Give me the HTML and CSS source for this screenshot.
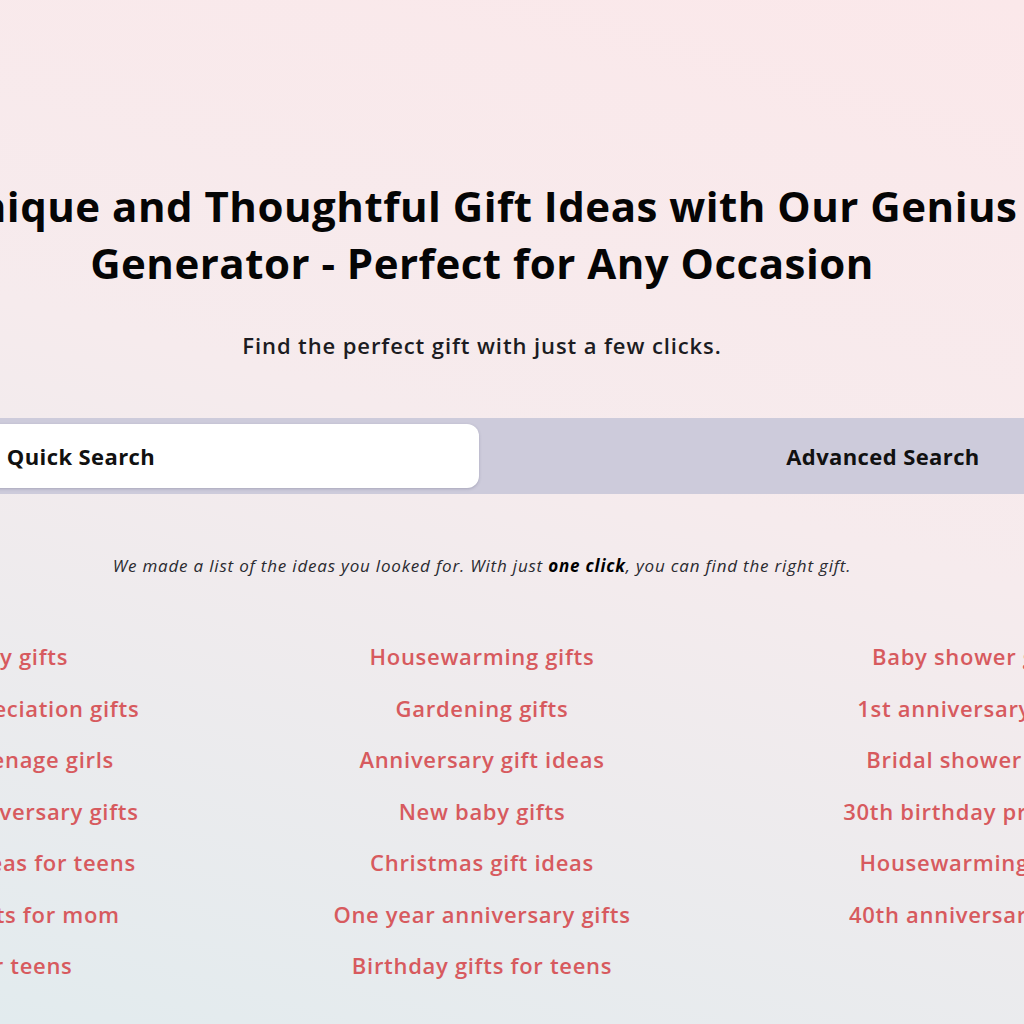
FILE: index.html
```html
<!DOCTYPE html>
<html lang="en">
<head>
    <meta charset="UTF-8">
    <meta name="viewport" content="width=device-width, initial-scale=1.0">
    <title>Genius Gift Generator</title>
    <link rel="stylesheet" href="styles.css">
</head>
<body>

<main class="page">
    <section class="hero">
        <h1 class="title">Unique and Thoughtful Gift Ideas with Our Genius Generator - Perfect for Any Occasion</h1>
        <p class="lead">Find the perfect gift with just a few clicks.</p>
    </section>

    <div class="tabs">
        <button class="tab active">Quick Search</button>
        <button class="tab">Advanced Search</button>
    </div>

    <p class="note">We made a list of the ideas you looked for. With just <b>one click</b>, you can find the right gift.</p>

    <ul class="ideas">
        <li><a href="#">Birthday gifts</a></li>
        <li><a href="#">Housewarming gifts</a></li>
        <li><a href="#">Baby shower gifts</a></li>

        <li><a href="#">Teacher appreciation gifts</a></li>
        <li><a href="#">Gardening gifts</a></li>
        <li><a href="#">1st anniversary gifts</a></li>

        <li><a href="#">Gifts for teenage girls</a></li>
        <li><a href="#">Anniversary gift ideas</a></li>
        <li><a href="#">Bridal shower gifts</a></li>

        <li><a href="#">Wedding anniversary gifts</a></li>
        <li><a href="#">New baby gifts</a></li>
        <li><a href="#">30th birthday presents</a></li>

        <li><a href="#">Christmas ideas for teens</a></li>
        <li><a href="#">Christmas gift ideas</a></li>
        <li><a href="#">Housewarming gifts</a></li>

        <li><a href="#">Birthday gifts for mom</a></li>
        <li><a href="#">One year anniversary gifts</a></li>
        <li><a href="#">40th anniversary gifts</a></li>

        <li><a href="#">Gifts for teens</a></li>
        <li><a href="#">Birthday gifts for teens</a></li>
    </ul>
</main>

</body>
</html>
```

FILE: styles.css
```css
html{
    min-height: 100%;
    background: linear-gradient(196deg, #fbe8ea 0%, #f6ebed 45%, #e2ebee 100%);
}
body{
    margin: 0;
    min-height: 1024px;
    overflow-x: hidden;
    font-family: "Open Sans", "Noto Sans", sans-serif;
    color: #111;
}

/* the page is wider than the window */
.page{
    width: 1610px;
    margin-left: -323px;
}

.hero{
    padding-top: 177px;
    text-align: center;
}
.title{
    max-width: 1160px;
    margin: 0 auto;
    font-size: 42px;
    line-height: 57px;
    letter-spacing: 0.5px;
    font-weight: 700;
    color: #050505;
}
.lead{
    margin: 40px 0 0;
    font-size: 22px;
    line-height: 28px;
    letter-spacing: 0.9px;
    font-weight: 600;
    color: #1c1c22;
}

/* ----------------------------- TABS ----------------------------- */
.tabs{
    display: grid;
    grid-template-columns: 1fr 1fr;
    gap: 6px;
    margin-top: 59px;
    padding: 6px;
    background-color: #cdcbdb;
}
.tab{
    height: 64px;
    border: none;
    border-radius: 12px;
    background: none;
    font-family: inherit;
    font-size: 22px;
    letter-spacing: 0.4px;
    font-weight: 700;
    color: #111;
    cursor: pointer;
}
.tab.active{
    background-color: #fff;
    box-shadow: 0 1px 3px rgba(60, 60, 90, 0.25);
}

.note{
    margin: 61px 0 0;
    text-align: center;
    font-size: 17px;
    line-height: 22px;
    letter-spacing: 0.8px;
    font-style: italic;
    color: #2a2a30;
}
.note b{
    color: #000;
}

/* ----------------------------- IDEAS ----------------------------- */
.ideas{
    display: grid;
    grid-template-columns: repeat(3, 490px);
    justify-content: center;
    row-gap: 21.5px;
    margin: 64px 0 0;
    padding: 0;
    list-style: none;
    text-align: center;
}
.ideas li{
    height: 30px;
    line-height: 30px;
}
.ideas a{
    text-decoration: none;
    font-size: 22px;
    letter-spacing: 0.7px;
    font-weight: 600;
    color: #d75a5e;
}
.ideas a:hover{
    text-decoration: underline;
}
```
